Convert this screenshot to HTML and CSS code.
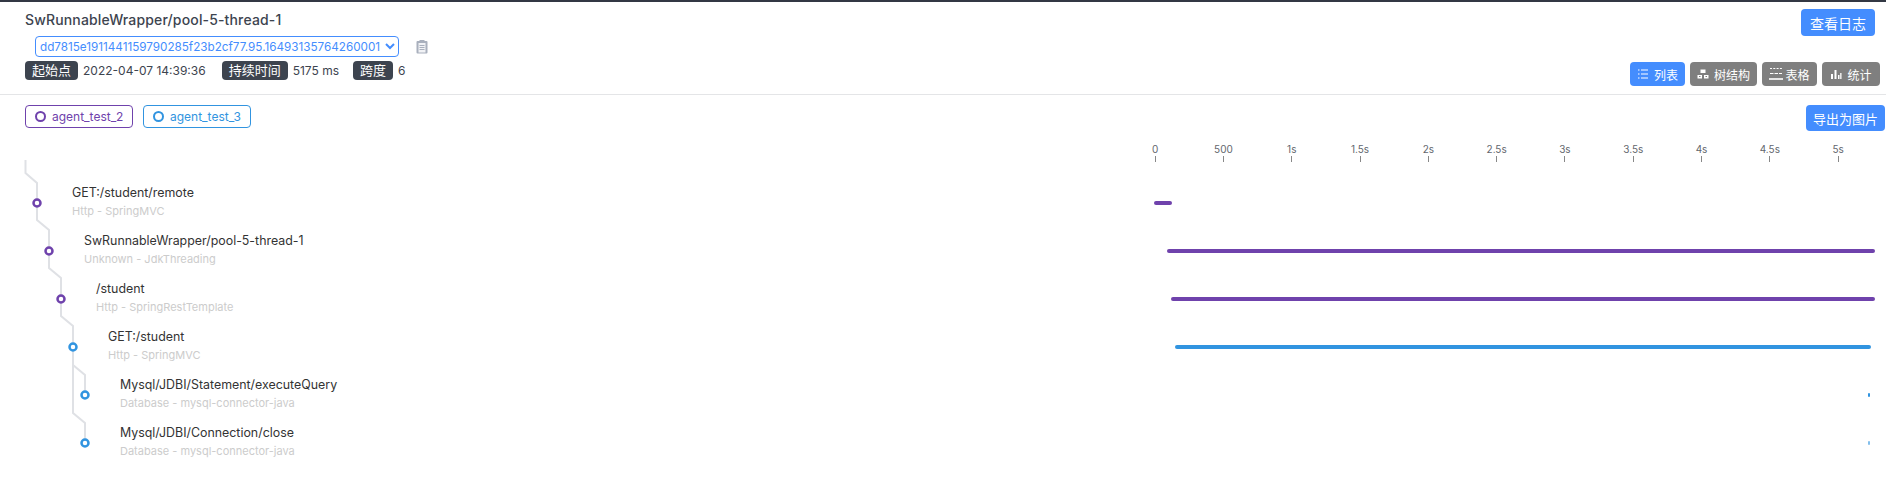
FILE: index.html
```html
<!DOCTYPE html>
<html lang="en">
<head>
    <meta charset="UTF-8">
    <title>Trace Profile</title>
    <link rel="stylesheet" href="styles.css">
</head>
<body>
    <header class="trace-header">
        <div class="summary">
            <h1 class="trace-title">SwRunnableWrapper/pool-5-thread-1</h1>
            <div class="id-row">
                <select class="trace-select">
                    <option>dd7815e1911441159790285f23b2cf77.95.16493135764260001</option>
                </select>
                <svg class="copy-icon" viewBox="0 0 12 15" width="12" height="15">
                    <path d="M1.500 2h2V1h5v1h2a1 1 0 0 1 1 1v10.500a1 1 0 0 1-1 1h-9a1 1 0 0 1-1-1V3a1 1 0 0 1 1-1z" fill="#a9b0bd"/>
                    <path d="M2.500 4h7v9.500h-7z" fill="#f1f2f5"/>
                    <path d="M3.500 6.500h5M3.500 8.500h5M3.500 10.500h5" stroke="#a9b0bd" stroke-width="1"/>
                </svg>
            </div>
            <div class="meta-row">
                <span class="meta-label">起始点</span><span class="meta-value first">2022-04-07 14:39:36</span>
                <span class="meta-label">持续时间</span><span class="meta-value second">5175 ms</span>
                <span class="meta-label">跨度</span><span class="meta-value">6</span>
            </div>
        </div>
        <div class="actions">
            <button class="btn btn-log">查看日志</button>
            <div class="view-switch">
                <button class="view-btn view-list active">
                    <svg viewBox="0 0 12 12" width="12" height="12"><path d="M1 2h1.500M4 2h7M1 6h1.500M4 6h7M1 10h1.500M4 10h7" stroke="#fff" stroke-width="1.200" fill="none"/></svg>
                    列表
                </button>
                <button class="view-btn view-tree">
                    <svg viewBox="0 0 12 12" width="12" height="12"><path d="M3.500 1.500h5v3.500h-5zM0.500 7h4.500v3.500h-4.500zM7 7h4.500v3.500h-4.500z" fill="#fff"/><path d="M2 8.500h1.500M8.500 8.500h1.500" stroke="#7f7f7f"/></svg>
                    树结构
                </button>
                <button class="view-btn view-table">
                    <svg viewBox="0 0 14 14" width="14" height="14"><path d="M1 1.500h12" stroke="#fff" stroke-width="1.200" stroke-dasharray="2 1.300" fill="none"/><path d="M1 6.500h12" stroke="#fff" stroke-width="1.200" stroke-dasharray="3.500 1" fill="none"/><path d="M0 12h14" stroke="#fff" stroke-width="1.600"/></svg>
                    表格
                </button>
                <button class="view-btn view-stats">
                    <svg viewBox="0 0 12 12" width="12" height="12"><path d="M1 6h2v5H1zM4.500 2h2v9h-2zM8 7h1.500v4H8zM10.200 5h1.300v6h-1.300z" fill="#fff"/></svg>
                    统计
                </button>
            </div>
        </div>
    </header>

    <div class="legend-row">
        <div class="legend">
            <span class="tag tag-purple"><i class="tag-dot"></i>agent_test_2</span>
            <span class="tag tag-blue"><i class="tag-dot"></i>agent_test_3</span>
        </div>
        <button class="btn btn-export">导出为图片</button>
    </div>

    <section class="trace">
        <div class="axis">
            <div class="tick">0</div>
            <div class="tick">500</div>
            <div class="tick">1s</div>
            <div class="tick">1.5s</div>
            <div class="tick">2s</div>
            <div class="tick">2.5s</div>
            <div class="tick">3s</div>
            <div class="tick">3.5s</div>
            <div class="tick">4s</div>
            <div class="tick">4.5s</div>
            <div class="tick">5s</div>
        </div>

        <div class="spans">
            <svg class="links" width="100" height="300" viewBox="0 0 100 300">
                <path d="M25.500 0V13L37 23V43V60L49 70V91V108L61 118V139V156L73 166V187V205L85 215V235M73 205V253L85 263V283" fill="none" stroke="#dfe1e5" stroke-width="2"/>
                <circle class="node-purple" cx="37" cy="43" r="3.500"/>
                <circle class="node-purple" cx="49" cy="91" r="3.500"/>
                <circle class="node-purple" cx="61" cy="139" r="3.500"/>
                <circle class="node-blue" cx="73" cy="187" r="3.500"/>
                <circle class="node-blue" cx="85" cy="235" r="3.500"/>
                <circle class="node-blue" cx="85" cy="283" r="3.500"/>
            </svg>

            <div class="span-row">
                <div class="span-text" style="padding-left: 72px">
                    <div class="span-name">GET:/student/remote</div>
                    <div class="span-sub">Http - SpringMVC</div>
                </div>
                <div class="track"><div class="bar bar-purple" style="margin-left: -1px; width: 18px"></div></div>
            </div>
            <div class="span-row">
                <div class="span-text" style="padding-left: 84px">
                    <div class="span-name">SwRunnableWrapper/pool-5-thread-1</div>
                    <div class="span-sub">Unknown - JdkThreading</div>
                </div>
                <div class="track"><div class="bar bar-purple" style="margin-left: 12px; width: 708px"></div></div>
            </div>
            <div class="span-row">
                <div class="span-text" style="padding-left: 96px">
                    <div class="span-name">/student</div>
                    <div class="span-sub">Http - SpringRestTemplate</div>
                </div>
                <div class="track"><div class="bar bar-purple" style="margin-left: 16px; width: 704px"></div></div>
            </div>
            <div class="span-row">
                <div class="span-text" style="padding-left: 108px">
                    <div class="span-name">GET:/student</div>
                    <div class="span-sub">Http - SpringMVC</div>
                </div>
                <div class="track"><div class="bar bar-blue" style="margin-left: 20px; width: 696px"></div></div>
            </div>
            <div class="span-row">
                <div class="span-text" style="padding-left: 120px">
                    <div class="span-name">Mysql/JDBI/Statement/executeQuery</div>
                    <div class="span-sub">Database - mysql-connector-java</div>
                </div>
                <div class="track"><div class="bar bar-blue" style="margin-left: 713px; width: 2px"></div></div>
            </div>
            <div class="span-row">
                <div class="span-text" style="padding-left: 120px">
                    <div class="span-name">Mysql/JDBI/Connection/close</div>
                    <div class="span-sub">Database - mysql-connector-java</div>
                </div>
                <div class="track"><div class="bar bar-blue faint" style="margin-left: 713px; width: 2px"></div></div>
            </div>
        </div>
    </section>
</body>
</html>
```

FILE: styles.css
```css
* {
    box-sizing: border-box;
}

body {
    margin: 0;
    height: 501px;
    overflow: hidden;
    background: #fff;
    color: #3d444f;
    border-top: 2px solid #333844;
    font-family: Inter, "Noto Sans CJK SC", sans-serif;
    font-size: 12px;
}

.trace-header {
    display: flex;
    justify-content: space-between;
    height: 93px;
    padding: 0 6px 0 25px;
    border-bottom: 1px solid #e4e5e7;
}

.trace-title {
    margin: 9px 0 0;
    font-size: 14px;
    line-height: 18px;
    font-weight: 500;
    letter-spacing: 0.15px;
    color: #3d444f;
}

.id-row {
    display: flex;
    align-items: center;
    margin: 7px 0 0 10px;
}

.trace-select {
    width: 364px;
    height: 21px;
    padding: 0;
    border: 1px solid #448dfe;
    border-radius: 4px;
    background: #fff;
    color: #448dfe;
    font-family: inherit;
    font-size: 11.700px;
    outline: none;
}

.copy-icon {
    margin-left: 17px;
}

.meta-row {
    display: flex;
    align-items: center;
    margin-top: 4px;
}

.meta-label {
    padding: 0 7px;
    height: 19px;
    line-height: 19px;
    border-radius: 4px;
    background: #3d444f;
    color: #fff;
    font-size: 13px;
}

.meta-value {
    margin-left: 5px;
    font-size: 12px;
}

.meta-value.first {
    margin-right: 16px;
}

.meta-value.second {
    margin-right: 14px;
}

.actions {
    display: flex;
    flex-direction: column;
    align-items: flex-end;
}

.btn {
    border: none;
    border-radius: 4px;
    background: #448dfe;
    color: #fff;
    font-family: inherit;
    font-size: 13px;
}

.btn-log {
    width: 74px;
    height: 27px;
    margin: 7px 5px 0 0;
    padding: 0;
    font-size: 14px;
}

.view-switch {
    display: flex;
    gap: 5px;
    margin-top: 26px;
}

.view-btn {
    display: flex;
    align-items: center;
    justify-content: center;
    gap: 5px;
    height: 24px;
    padding: 0;
    border: none;
    border-radius: 4px;
    background: #7f7f7f;
    color: #fff;
    font-family: inherit;
    font-size: 12px;
    white-space: nowrap;
}

.view-btn.active {
    background: #448dfe;
}

.view-list,
.view-table {
    width: 55px;
}

.view-tree {
    width: 67px;
}

.view-stats {
    width: 58px;
}

.view-table {
    gap: 2px;
}

.legend-row {
    display: flex;
    justify-content: space-between;
    height: 43px;
    padding: 10px 1px 0 25px;
}

.legend {
    display: flex;
    gap: 10px;
    height: 23px;
}

.tag {
    display: flex;
    align-items: center;
    width: 108px;
    padding-left: 9px;
    border: 1px solid;
    border-radius: 4px;
    font-size: 12px;
}

.tag-dot {
    width: 11px;
    height: 11px;
    margin-right: 6px;
    border: 2px solid;
    border-radius: 50%;
}

.tag-purple {
    color: #6f42ac;
}

.tag-blue {
    color: #3194e0;
}

.btn-export {
    width: 79px;
    height: 26px;
    padding: 0;
}

.axis {
    display: flex;
    margin-left: 1121px;
    height: 41px;
}

.tick {
    flex: 0 0 68.3px;
    text-align: center;
    font-size: 10px;
    line-height: 12px;
    color: #63676e;
    padding-top: 5px;
}

.tick::after {
    content: "";
    display: block;
    width: 1px;
    height: 6px;
    margin: 1px auto 0;
    background: #888;
}

.spans {
    position: relative;
}

.links {
    position: absolute;
    top: -19px;
    left: 0;
}

.links circle {
    fill: #fff;
    stroke-width: 2.500;
}

.node-purple {
    stroke: #6f42ac;
}

.node-blue {
    stroke: #3194e0;
}

.span-row {
    display: flex;
    align-items: center;
    height: 48px;
}

.span-text {
    flex: 0 0 1155px;
    padding-bottom: 4px;
}

.span-name {
    font-size: 12.400px;
    line-height: 16px;
    color: #333;
}

.span-sub {
    margin-top: 3px;
    font-size: 11px;
    line-height: 14px;
    color: #ccc;
}

.track {
    flex: 1;
}

.bar {
    height: 4px;
    border-radius: 2px;
}

.bar-purple {
    background: #6f42ac;
}

.bar-blue {
    background: #3194e0;
}

.faint {
    opacity: 0.6;
}
```
